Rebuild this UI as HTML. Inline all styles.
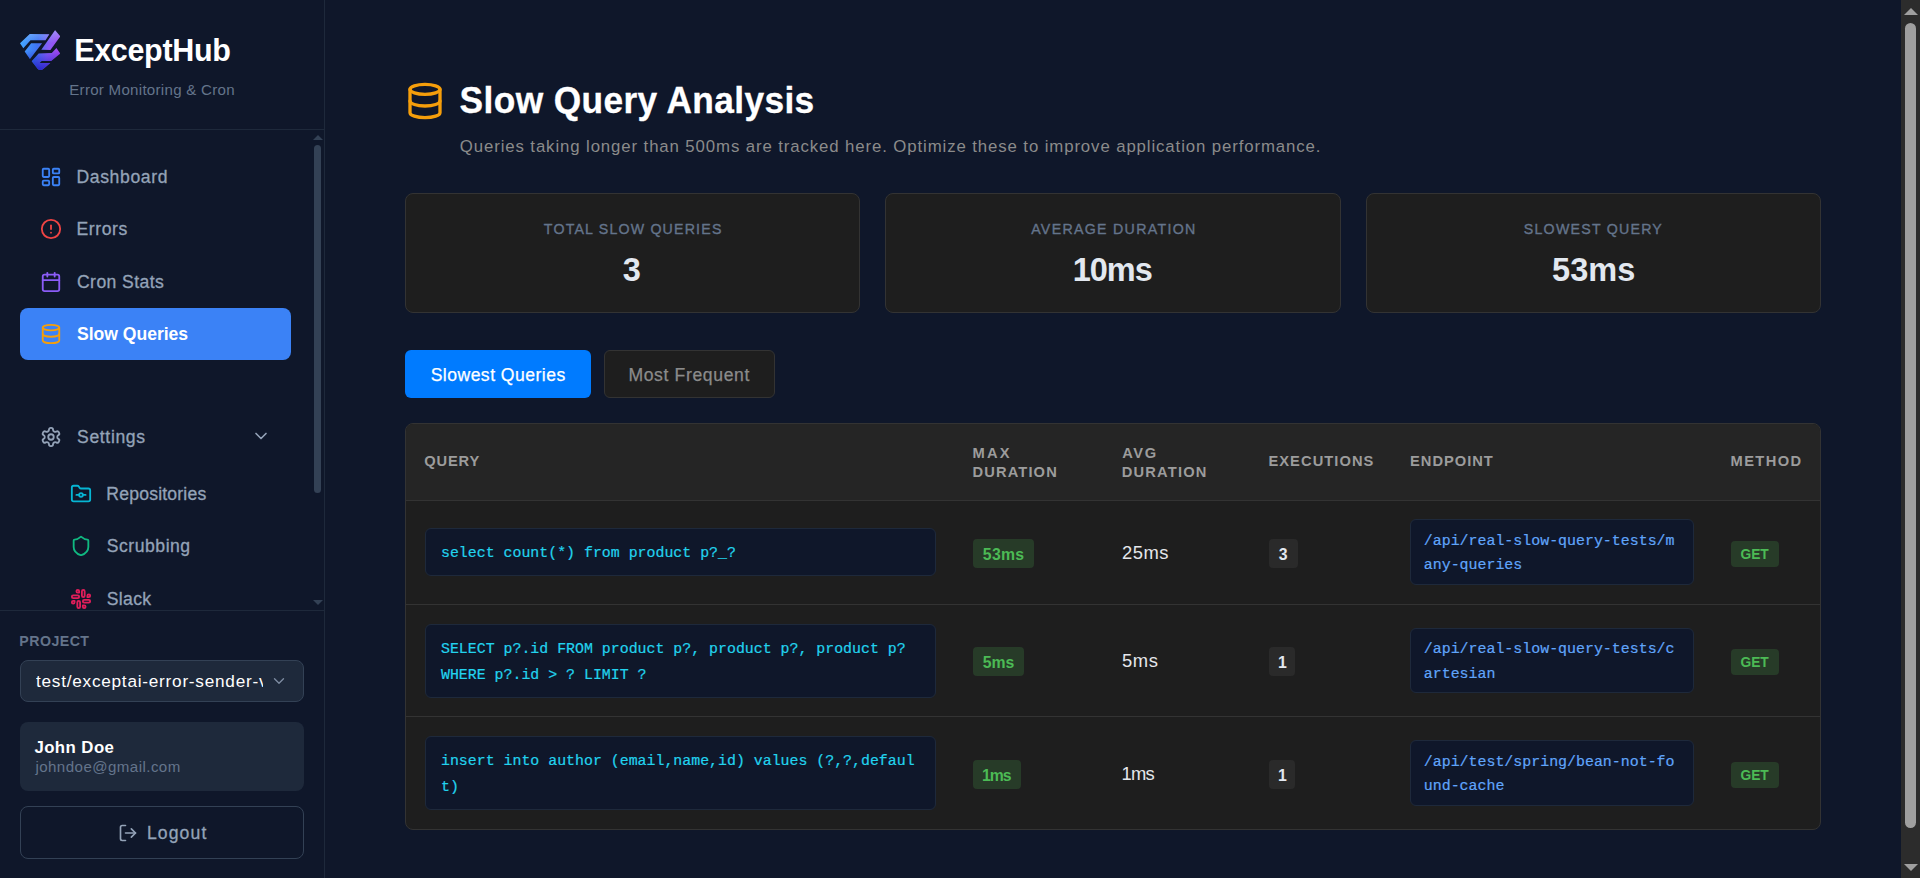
<!DOCTYPE html>
<html lang="en">
<head>
<meta charset="utf-8">
<title>ExceptHub - Slow Query Analysis</title>
<style>
*{box-sizing:border-box;margin:0;padding:0}
html,body{width:1920px;height:878px;overflow:hidden;background:#0f172a}
body{font-family:"Liberation Sans",Arial,sans-serif;color:#e2e8f0;position:relative;-webkit-font-smoothing:antialiased}
svg{display:block}
.ico{fill:none;stroke:currentColor;stroke-width:2;stroke-linecap:round;stroke-linejoin:round}

/* ---------- sidebar ---------- */
.sidebar{position:absolute;left:0;top:0;width:325px;height:878px;background:#0f172a;border-right:1px solid #1e293b}
.brand{position:absolute;left:0;top:0;width:324px;height:130px;border-bottom:1px solid #1e293b}
.brand .logo{position:absolute;left:20px;top:30px;width:40px;height:40px}
.brand h1{transform:scaleY(1.047);transform-origin:50% 50%;position:absolute;left:75px;top:30px;font-size:30.5px;line-height:40px;font-weight:700;color:#fff;letter-spacing:-0.2px;white-space:nowrap}
.brand p{position:absolute;left:70px;top:80px;font-size:15.1px;line-height:20px;color:#64748b;white-space:nowrap}

.nav{position:absolute;left:0;top:130px;width:324px;height:480px;overflow:hidden}
.nav a{position:absolute;left:20px;width:271px;height:52px;border-radius:8px;color:#94a3b8;font-size:17.6px;font-weight:400;text-decoration:none;white-space:nowrap}
.nav a svg{position:absolute;left:20.2px;top:15px;width:22px;height:22px}
.nav a span{position:absolute;left:58px;top:0;line-height:52px}
.nav a span{-webkit-text-stroke:.3px currentColor}
.nav a.active{background:#3b82f6;color:#fff;font-weight:700}
.nav a.active span{-webkit-text-stroke:0}
.nav a.sub svg{left:50.3px}
.nav a.sub span{left:88px}
.nav .chev{left:231px!important;top:15px!important;width:20px!important;height:20px!important}
.sb-thumb{position:absolute;left:314px;top:15px;width:7px;height:348px;border-radius:4px;background:#334155}
.sb-up,.sb-dn{position:absolute;left:312.5px;width:0;height:0;border-left:5px solid transparent;border-right:5px solid transparent}
.sb-up{top:4.5px;border-bottom:5.5px solid #334155}
.sb-dn{top:469.7px;border-top:5.5px solid #334155}

.foot{position:absolute;left:0;top:610px;width:324px;height:268px;border-top:1px solid #1e293b}
.foot .lbl{position:absolute;left:20px;top:19px;font-size:14.2px;line-height:20px;font-weight:700;color:#64748b;letter-spacing:.2px}
.foot .select{position:absolute;left:20px;top:49px;width:284px;height:42px;border:1px solid #334155;border-radius:8px;background:#1e293b;color:#fff;font-size:17.2px;line-height:39px;overflow:hidden;white-space:nowrap}
.foot .select span{position:absolute;left:15px;top:0;width:227px;overflow:hidden}
.foot .select svg{position:absolute;left:249.2px;top:11px;width:18px;height:18px;color:#7c8aa0;stroke-width:1.8}
.foot .user{position:absolute;left:20px;top:111px;width:284px;height:69px;border-radius:8px;background:#1e293b}
.foot .user b{position:absolute;left:15px;top:14px;font-size:16.8px;line-height:20px;color:#fff;font-weight:700}
.foot .user i{position:absolute;left:15px;top:35px;font-style:normal;font-size:15.1px;line-height:18px;color:#64748b}
.foot .logout{position:absolute;left:20px;top:195px;width:284px;height:53px;border:1px solid #334155;border-radius:8px;color:#94a3b8;font-size:17.6px}
.foot .logout svg{position:absolute;left:97px;top:16px;width:20px;height:20px}
.foot .logout span{-webkit-text-stroke:.3px currentColor}
.foot .logout span{position:absolute;left:127px;top:0;line-height:50px}

/* ---------- main ---------- */
.main{position:absolute;left:325px;top:0;width:1576px;height:878px;background:#0f172a}
.title-ico{position:absolute;left:80px;top:81px;width:40px;height:40px;color:#f59e0b}
.main h2{transform:scaleY(1.03);transform-origin:50% 50%;-webkit-text-stroke:.3px #fff;position:absolute;left:135px;top:80px;font-size:35.3px;line-height:42px;font-weight:700;color:#fff;white-space:nowrap}
.main .desc{position:absolute;left:135px;top:134px;font-size:16.8px;line-height:24px;color:#8b8b8b;white-space:nowrap}

.card{position:absolute;top:193px;width:456px;height:120px;background:#1e1e1e;border:1px solid #333;border-radius:8px;text-align:center}
.card .k{position:absolute;left:0;right:0;top:25px;font-size:14.2px;line-height:20px;font-weight:400;color:#64748b;-webkit-text-stroke:.35px #64748b}
.card .v{position:absolute;left:0;right:0;top:56px;font-size:32.5px;line-height:40px;font-weight:700;color:#e2e8f0}

.tab{position:absolute;top:350px;height:48px;border-radius:6px;font-size:17.6px;line-height:48px;text-align:center;white-space:nowrap}
.tab.on{left:80px;width:186px;background:#007bff;color:#fff}
.tab span{-webkit-text-stroke:.25px currentColor}
.tab.off{left:279px;width:171px;background:#1e1e1e;border:1px solid #333;color:#8b8b8b;line-height:46px}

.tbl{position:absolute;left:80px;top:423px;width:1416px;height:407px;background:#1e1e1e;border:1px solid #333;border-radius:8px;overflow:hidden}
.thead{position:absolute;left:0;top:0;width:1414px;height:77px;background:#252525;border-bottom:1px solid #333}
.th{position:absolute;font-size:14.7px;line-height:19px;font-weight:700;color:#9c9c9c;white-space:nowrap}
.row{position:absolute;left:0;width:1414px;border-bottom:1px solid #333}
.row:last-child{border-bottom:0}
.code{-webkit-text-stroke:.2px currentColor;position:absolute;background:#0f172a;border:1px solid #1e293b;border-radius:6px;font-family:"Liberation Mono","DejaVu Sans Mono",monospace;white-space:pre}
.q{left:19px;width:511px;color:#22d3ee;font-size:14.9px;line-height:26px;padding:11px 15px 0}
.e{left:1004.4px;width:283.6px;color:#60a5fa;font-size:14.93px;line-height:24.5px;padding:8.3px 12.4px 0}
.badge{position:absolute;border-radius:4px;font-size:15.8px;font-weight:700;height:29px;text-align:center}
.g{background:#273b28;color:#4cba55}
.badge.m{font-size:13.8px;height:26px}
.n{background:#2a2a2a;color:#e2e8f0}
.avg{position:absolute;left:717px;font-size:18.4px;line-height:28px;color:#e5e7eb}

.t{position:absolute;white-space:nowrap}
.card .t,.tab .t,.badge .t{left:0;top:0;line-height:20px}
/*TUNE-START*/
#t1{left:74.26px;top:29.0px;letter-spacing:-0.342px}
#t2{left:69.25px;top:79.5px;letter-spacing:0.271px}
#t3{left:56.40px;top:0.5px;letter-spacing:0.635px}
#t4{left:56.40px;top:0.0px;letter-spacing:0.623px}
#t5{left:57.02px;top:0.5px;letter-spacing:0.403px}
#t6{left:57.02px;top:0.0px;letter-spacing:-0.031px}
#t7{left:57.03px;top:0.5px;letter-spacing:0.642px}
#t8{left:86.34px;top:0.5px;letter-spacing:0.192px}
#t9{left:86.79px;top:-0.5px;letter-spacing:0.518px}
#t10{left:86.79px;top:-0.5px;letter-spacing:0.334px}
#t11{left:19.30px;top:19.5px;letter-spacing:0.454px}
#t12{left:14.94px;top:1.0px;letter-spacing:0.759px}
#t13{left:14.43px;top:15.5px;letter-spacing:0.433px}
#t14{left:15.42px;top:36.0px;letter-spacing:0.441px}
#t15{left:125.89px;top:0.5px;letter-spacing:1.126px}
#t16{left:134.60px;top:80.0px;letter-spacing:0.375px}
#t17{left:134.77px;top:135.0px;letter-spacing:0.893px}
#t18{left:137.85px;top:-0.5px;letter-spacing:1.182px}
#t19{left:216.72px;top:9.5px;letter-spacing:0.000px}
#t20{left:145.16px;top:-0.5px;letter-spacing:1.303px}
#t21{left:186.68px;top:9.5px;letter-spacing:-0.990px}
#t22{left:156.81px;top:-0.5px;letter-spacing:1.232px}
#t23{left:185.12px;top:9.5px;letter-spacing:0.021px}
#t24{left:25.67px;top:14.5px;letter-spacing:0.459px}
#t25{left:23.40px;top:13.5px;letter-spacing:0.627px}
#t26{left:18.19px;top:27.5px;letter-spacing:0.831px}
#t27{left:566.41px;top:20.0px;letter-spacing:2.298px}
#t27b{left:566.41px;top:38.5px;letter-spacing:1.137px}
#t28{left:716.22px;top:20.0px;letter-spacing:1.600px}
#t28b{left:715.72px;top:38.5px;letter-spacing:1.174px}
#t29{left:862.41px;top:27.5px;letter-spacing:1.059px}
#t30{left:1004.09px;top:27.5px;letter-spacing:0.973px}
#t31{left:1324.51px;top:27.5px;letter-spacing:1.395px}
#t32{left:9.86px;top:5.5px;letter-spacing:0.234px}
#t33{left:716.12px;top:38.0px;letter-spacing:0.467px}
#t34{left:9.66px;top:5.5px;letter-spacing:0.000px}
#t35{left:9.59px;top:4.0px;letter-spacing:-0.180px}
#t36{left:9.86px;top:5.5px;letter-spacing:-0.034px}
#t37{left:716.12px;top:42.0px;letter-spacing:0.532px}
#t38{left:9.09px;top:5.5px;letter-spacing:0.000px}
#t39{left:9.59px;top:4.0px;letter-spacing:-0.180px}
#t40{left:9.02px;top:5.5px;letter-spacing:-1.041px}
#t41{left:715.47px;top:43.0px;letter-spacing:-0.790px}
#t42{left:9.09px;top:5.5px;letter-spacing:0.000px}
#t43{left:9.59px;top:4.0px;letter-spacing:-0.180px}
/*TUNE-END*/

/* page scrollbar */
.pscroll{position:absolute;left:1901px;top:0;width:19px;height:878px;background:#2c2c2c}
.pscroll .thumb{position:absolute;left:4px;top:23px;width:11px;height:805px;border-radius:6px;background:#9f9f9f}
.pscroll .u,.pscroll .d{position:absolute;left:2.5px;width:0;height:0;border-left:7px solid transparent;border-right:7px solid transparent}
.pscroll .u{top:7.5px;border-bottom:7.5px solid #9f9f9f}
.pscroll .d{top:864px;border-top:7.5px solid #9f9f9f}
</style>
</head>
<body>

<aside class="sidebar">
  <div class="brand">
    <svg class="logo" viewBox="146.4 146.4 585.6 585.6">
      <defs>
        <linearGradient id="lgh" x1="170" y1="330" x2="720" y2="420" gradientUnits="userSpaceOnUse">
          <stop offset="0" stop-color="#43a4ff"/>
          <stop offset=".42" stop-color="#3f74f2"/>
          <stop offset=".72" stop-color="#8a5cf6"/>
          <stop offset="1" stop-color="#a346ee"/>
        </linearGradient>
        <linearGradient id="lgv" x1="0" y1="150" x2="0" y2="735" gradientUnits="userSpaceOnUse">
          <stop offset="0" stop-color="#a8c8ff" stop-opacity=".5"/>
          <stop offset=".32" stop-color="#a8c8ff" stop-opacity="0"/>
          <stop offset=".5" stop-color="#2020c8" stop-opacity="0"/>
          <stop offset="1" stop-color="#1c1cc4" stop-opacity=".85"/>
        </linearGradient>
      </defs>
      <path fill="url(#lgh)" d="M146 340 L290 205 L575 210 L520 297 L300 297 L195 412 Z M310 340 L470 340 L292 572 L215 460 Z M660 150 L737 240 L592 440 L458 435 Z M680 410 L735 492 L602 602 L462 602 L432 628 L590 630 L482 720 Q445 742 410 720 L318 605 L420 490 L612 482 Z"/>
      <path fill="url(#lgv)" d="M146 340 L290 205 L575 210 L520 297 L300 297 L195 412 Z M310 340 L470 340 L292 572 L215 460 Z M660 150 L737 240 L592 440 L458 435 Z M680 410 L735 492 L602 602 L462 602 L432 628 L590 630 L482 720 Q445 742 410 720 L318 605 L420 490 L612 482 Z"/>
    </svg>
    <h1 id="t1" class="t">ExceptHub</h1>
    <p id="t2" class="t">Error Monitoring &amp; Cron</p>
  </div>

  <nav class="nav">
    <a style="top:20.5px"><svg class="ico" viewBox="0 0 24 24" style="color:#3b82f6"><rect width="7" height="9" x="3" y="3" rx="1"/><rect width="7" height="5" x="14" y="3" rx="1"/><rect width="7" height="9" x="14" y="12" rx="1"/><rect width="7" height="5" x="3" y="16" rx="1"/></svg><span id="t3" class="t">Dashboard</span></a>
    <a style="top:73px"><svg class="ico" viewBox="0 0 24 24" style="color:#ef4444"><circle cx="12" cy="12" r="10"/><line x1="12" x2="12" y1="8" y2="12"/><line x1="12" x2="12.01" y1="16" y2="16"/></svg><span id="t4" class="t">Errors</span></a>
    <a style="top:125.5px"><svg class="ico" viewBox="0 0 24 24" style="color:#8b5cf6"><path d="M8 2v4"/><path d="M16 2v4"/><rect width="18" height="18" x="3" y="4" rx="2"/><path d="M3 10h18"/></svg><span id="t5" class="t">Cron Stats</span></a>
    <a class="active" style="top:178px"><svg class="ico" viewBox="0 0 24 24" style="color:#f59e0b"><ellipse cx="12" cy="5" rx="9" ry="3"/><path d="M3 5V19A9 3 0 0 0 21 19V5"/><path d="M3 12A9 3 0 0 0 21 12"/></svg><span id="t6" class="t">Slow Queries</span></a>
    <a style="top:280.5px"><svg class="ico" viewBox="0 0 24 24"><path d="M12.220 2h-.440a2 2 0 0 0-2 2v.180a2 2 0 0 1-1 1.730l-.430.250a2 2 0 0 1-2 0l-.150-.080a2 2 0 0 0-2.730.730l-.220.380a2 2 0 0 0 .730 2.730l.150.100a2 2 0 0 1 1 1.720v.510a2 2 0 0 1-1 1.740l-.150.090a2 2 0 0 0-.730 2.730l.220.380a2 2 0 0 0 2.730.730l.150-.080a2 2 0 0 1 2 0l.430.250a2 2 0 0 1 1 1.730V20a2 2 0 0 0 2 2h.440a2 2 0 0 0 2-2v-.180a2 2 0 0 1 1-1.730l.430-.250a2 2 0 0 1 2 0l.150.080a2 2 0 0 0 2.730-.730l.220-.390a2 2 0 0 0-.730-2.730l-.150-.080a2 2 0 0 1-1-1.740v-.500a2 2 0 0 1 1-1.740l.150-.090a2 2 0 0 0 .730-2.730l-.220-.380a2 2 0 0 0-2.730-.730l-.150.080a2 2 0 0 1-2 0l-.430-.250a2 2 0 0 1-1-1.730V4a2 2 0 0 0-2-2z"/><circle cx="12" cy="12" r="3"/></svg><span id="t7" class="t">Settings</span><svg class="ico chev" viewBox="0 0 24 24"><path d="m6 9 6 6 6-6"/></svg></a>
    <a class="sub" style="top:337.5px"><svg class="ico" viewBox="0 0 24 24" style="color:#06b6d4"><circle cx="12" cy="13" r="2"/><path d="M20 20a2 2 0 0 0 2-2V8a2 2 0 0 0-2-2h-7.900a2 2 0 0 1-1.690-.900L9.600 3.900A2 2 0 0 0 7.930 3H4a2 2 0 0 0-2 2v13a2 2 0 0 0 2 2Z"/><path d="M14 13h3"/><path d="M7 13h3"/></svg><span id="t8" class="t">Repositories</span></a>
    <a class="sub" style="top:390px"><svg class="ico" viewBox="0 0 24 24" style="color:#10b981"><path d="M20 13c0 5-3.500 7.500-7.660 8.950a1 1 0 0 1-.670-.010C7.500 20.500 4 18 4 13V6a1 1 0 0 1 1-1c2 0 4.500-1.200 6.240-2.720a1.170 1.170 0 0 1 1.520 0C14.510 3.810 17 5 19 5a1 1 0 0 1 1 1z"/></svg><span id="t9" class="t">Scrubbing</span></a>
    <a class="sub" style="top:443px"><svg class="ico" viewBox="0 0 24 24" style="color:#e01e5a"><rect width="3" height="8" x="13" y="2" rx="1.500"/><path d="M19 8.500V10h1.500A1.500 1.500 0 1 0 19 8.500"/><rect width="3" height="8" x="8" y="14" rx="1.500"/><path d="M5 15.500V14H3.500A1.500 1.500 0 1 0 5 15.500"/><rect width="8" height="3" x="14" y="13" rx="1.500"/><path d="M15.500 19H14v1.500a1.500 1.500 0 1 0 1.500-1.500"/><rect width="8" height="3" x="2" y="8" rx="1.500"/><path d="M8.500 5H10V3.500A1.500 1.500 0 1 0 8.500 5"/></svg><span id="t10" class="t">Slack</span></a>
    <div class="sb-up"></div><div class="sb-thumb"></div><div class="sb-dn"></div>
  </nav>

  <div class="foot">
    <div id="t11" class="lbl t">PROJECT</div>
    <div class="select"><span id="t12" class="t">test/exceptai-error-sender-v2</span><svg class="ico" viewBox="0 0 24 24"><path d="m6 9 6 6 6-6"/></svg></div>
    <div class="user"><b id="t13" class="t">John Doe</b><i id="t14" class="t">johndoe@gmail.com</i></div>
    <div class="logout"><svg class="ico" viewBox="0 0 24 24"><path d="M9 21H5a2 2 0 0 1-2-2V5a2 2 0 0 1 2-2h4"/><polyline points="16 17 21 12 16 7"/><line x1="21" x2="9" y1="12" y2="12"/></svg><span id="t15" class="t">Logout</span></div>
  </div>
</aside>

<main class="main">
  <svg class="ico title-ico" viewBox="0 0 24 24"><ellipse cx="12" cy="5" rx="9" ry="3"/><path d="M3 5V19A9 3 0 0 0 21 19V5"/><path d="M3 12A9 3 0 0 0 21 12"/></svg>
  <h2 id="t16" class="t">Slow Query Analysis</h2>
  <p id="t17" class="desc t">Queries taking longer than 500ms are tracked here. Optimize these to improve application performance.</p>

  <div class="card" style="left:80px;width:455px"><div class="k"><span id="t18" class="t">TOTAL SLOW QUERIES</span></div><div class="v"><span id="t19" class="t">3</span></div></div>
  <div class="card" style="left:560px"><div class="k"><span id="t20" class="t">AVERAGE DURATION</span></div><div class="v"><span id="t21" class="t">10ms</span></div></div>
  <div class="card" style="left:1041px;width:455px"><div class="k"><span id="t22" class="t">SLOWEST QUERY</span></div><div class="v"><span id="t23" class="t">53ms</span></div></div>

  <div class="tab on"><span id="t24" class="t">Slowest Queries</span></div>
  <div class="tab off"><span id="t25" class="t">Most Frequent</span></div>

  <div class="tbl">
    <div class="thead">
      <div id="t26" class="th t">QUERY</div>
      <div id="t27" class="th t">MAX</div><div id="t27b" class="th t">DURATION</div>
      <div id="t28" class="th t">AVG</div><div id="t28b" class="th t">DURATION</div>
      <div id="t29" class="th t">EXECUTIONS</div>
      <div id="t30" class="th t">ENDPOINT</div>
      <div id="t31" class="th t">METHOD</div>
    </div>

    <div class="row" style="top:77px;height:104px">
      <div class="code q" style="top:27px;height:48px">select count(*) from product p?_?</div>
      <div class="badge g" style="left:567px;top:38px;width:61px"><span id="t32" class="t">53ms</span></div>
      <div id="t33" class="avg t">25ms</div>
      <div class="badge n" style="left:863px;top:38px;width:29px"><span id="t34" class="t">3</span></div>
      <div class="code e" style="top:18.3px;height:65.3px">/api/real-slow-query-tests/m
any-queries</div>
      <div class="badge g m" style="left:1325px;top:40px;width:48px"><span id="t35" class="t">GET</span></div>
    </div>

    <div class="row" style="top:181px;height:112px">
      <div class="code q" style="top:19px;height:74px">SELECT p?.id FROM product p?, product p?, product p?
WHERE p?.id &gt; ? LIMIT ?</div>
      <div class="badge g" style="left:567px;top:42px;width:51px"><span id="t36" class="t">5ms</span></div>
      <div id="t37" class="avg t">5ms</div>
      <div class="badge n" style="left:863px;top:42px;width:26px"><span id="t38" class="t">1</span></div>
      <div class="code e" style="top:23.2px;height:65px">/api/real-slow-query-tests/c
artesian</div>
      <div class="badge g m" style="left:1325px;top:44px;width:48px"><span id="t39" class="t">GET</span></div>
    </div>

    <div class="row" style="top:293px;height:112px">
      <div class="code q" style="top:19px;height:74px">insert into author (email,name,id) values (?,?,defaul
t)</div>
      <div class="badge g" style="left:567px;top:43px;width:48px"><span id="t40" class="t">1ms</span></div>
      <div id="t41" class="avg t">1ms</div>
      <div class="badge n" style="left:863px;top:43px;width:26px"><span id="t42" class="t">1</span></div>
      <div class="code e" style="top:23.3px;height:65.3px">/api/test/spring/bean-not-fo
und-cache</div>
      <div class="badge g m" style="left:1325px;top:45px;width:48px"><span id="t43" class="t">GET</span></div>
    </div>
  </div>
</main>

<div class="pscroll"><div class="u"></div><div class="thumb"></div><div class="d"></div></div>

</body>
</html>
